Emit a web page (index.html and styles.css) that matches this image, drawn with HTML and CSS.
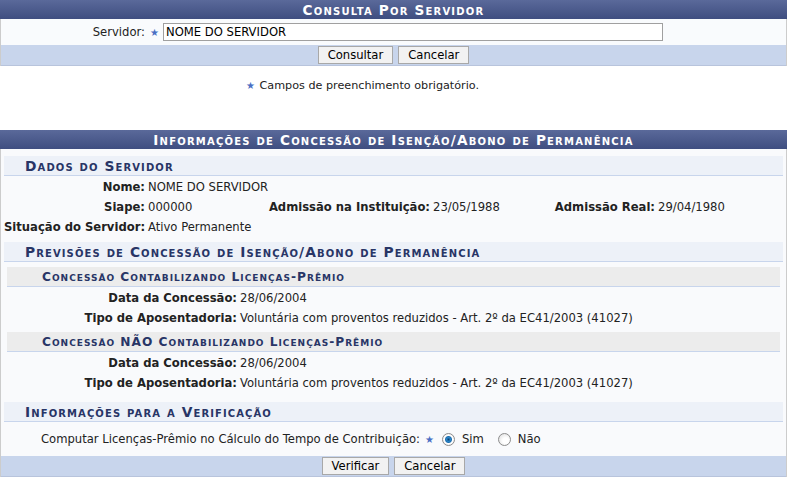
FILE: index.html
```html
<html>
<head>
    <meta charset="utf-8">
    <link rel="stylesheet" href="styles.css">
</head>
<body>
<div class='form busca'>
    <div class='caption'>Consulta Por Servidor</div>
    <div class='campo'>
        <label class='rotulo'>Servidor:</label>
        <span class='obrigatorio'>&#9733;</span>
        <input type='text' class='texto' value='NOME DO SERVIDOR'>
    </div>
    <div class='rodape'>
        <button>Consultar</button>
        <button>Cancelar</button>
    </div>
</div>

<p class='aviso'><span class='obrigatorio'>&#9733;</span> Campos de preenchimento obrigatório.</p>

<div class='form detalhe'>
    <div class='caption'>Informações de Concessão de Isenção/Abono de Permanência</div>
    <div class='corpo'>
        <h3 class='subtitulo'>Dados do Servidor</h3>
        <div class='dados'>
            <span class='th'>Nome:</span><span class='td largo'>NOME DO SERVIDOR</span>
            <span class='th'>Siape:</span><span class='td'>000000</span>
            <span class='th'>Admissão na Instituição:</span><span class='td'>23/05/1988</span>
            <span class='th'>Admissão Real:</span><span class='td'>29/04/1980</span>
            <span class='th'>Situação do Servidor:</span><span class='td largo'>Ativo Permanente</span>
        </div>

        <h3 class='subtitulo'>Previsões de Concessão de Isenção/Abono de Permanência</h3>
        <h4 class='subsub'>Concessão Contabilizando Licenças-Prêmio</h4>
        <div class='previsao'>
            <span class='th'>Data da Concessão:</span><span class='td'>28/06/2004</span>
            <span class='th'>Tipo de Aposentadoria:</span><span class='td'>Voluntária com proventos reduzidos - Art. 2º da EC41/2003 (41027)</span>
        </div>
        <h4 class='subsub'>Concessão NÃO Contabilizando Licenças-Prêmio</h4>
        <div class='previsao'>
            <span class='th'>Data da Concessão:</span><span class='td'>28/06/2004</span>
            <span class='th'>Tipo de Aposentadoria:</span><span class='td'>Voluntária com proventos reduzidos - Art. 2º da EC41/2003 (41027)</span>
        </div>

        <h3 class='subtitulo verificacao'>Informações para a Verificação</h3>
        <div class='computar'>
            <span>Computar Licenças-Prêmio no Cálculo do Tempo de Contribuição:</span>
            <span class='obrigatorio'>&#9733;</span>
            <label class='opcao'><input type='radio' name='computar' checked> Sim</label>
            <label class='opcao'><input type='radio' name='computar'> Não</label>
        </div>
    </div>
    <div class='rodape'>
        <button>Verificar</button>
        <button>Cancelar</button>
    </div>
</div>
</body>
</html>
```

FILE: styles.css
```css
body {
    margin: 0;
    width: 787px;
    font-family: "DejaVu Sans", Verdana, sans-serif;
    font-size: 11.6px;
    color: #222;
    background: #fff;
}

.form {
    border-left: 1px solid #ccc;
    border-right: 1px solid #ccc;
}

.caption {
    height: 19px;
    line-height: 20px;
    text-align: center;
    color: #fff;
    font-weight: bold;
    font-size: 13.6px;
    font-variant: small-caps;
    letter-spacing: 1.2px;
    background: linear-gradient(#5a699a, #3f4e80);
    margin: 0 -1px;
}

.busca .campo {
    display: flex;
    align-items: center;
    height: 26px;
    background: #f9fbfd;
}

.rotulo {
    width: 144px;
    text-align: right;
}

.obrigatorio {
    color: #4a6fc4;
    font-size: 10px;
    margin: 0 4px 0 5px;
}

.texto {
    width: 500px;
    height: 18px;
    border: 1px solid #a0a0a0;
    padding: 0 2px;
    font-family: inherit;
    font-size: 11.6px;
    color: #000;
}

.rodape {
    display: flex;
    justify-content: center;
    gap: 5px;
    height: 21px;
    padding-top: 1px;
    box-sizing: border-box;
    background: #c8d5ec;
    border-bottom: 1px solid #b8c4dc;
}

button {
    height: 18px;
    padding: 0 9px;
    font-family: inherit;
    font-size: 11.6px;
    color: #000;
    background: #f2f2f2;
    border: 1px solid #a8a8a8;
}

.aviso {
    margin: 13px 0 0;
    height: 51px;
    padding-right: 62px;
    font-size: 11.2px;
    text-align: center;
}

.aviso .obrigatorio {
    margin: 0 1px 0 0;
}

.corpo {
    background: #f9fafc;
    padding: 7px 3px 0;
}

.subtitulo {
    margin: 0;
    height: 19px;
    line-height: 21px;
    padding-left: 21px;
    font-size: 13.8px;
    font-variant: small-caps;
    letter-spacing: 1.1px;
    color: #283566;
    background: #edf1f8;
    border-bottom: 1px solid #c8d5ec;
}

.subsub {
    margin: 5px 3px 0;
    height: 19px;
    line-height: 21px;
    padding-left: 35px;
    font-size: 12.2px;
    font-variant: small-caps;
    letter-spacing: 1px;
    color: #283566;
    background: #ececec;
    border-bottom: 1px solid #c8d5ec;
}

.dados {
    display: grid;
    grid-template-columns: 144px 118px 167px 120px 105px auto;
    grid-auto-rows: 20px;
    align-items: center;
    padding-top: 1px;
    margin-bottom: 5px;
}

.previsao {
    display: grid;
    grid-template-columns: 236px auto;
    grid-auto-rows: 20px;
    align-items: center;
    padding-top: 1px;
}

.th {
    font-weight: bold;
    text-align: right;
    padding-right: 3px;
    white-space: nowrap;
}

.td {
    white-space: nowrap;
}

.largo {
    grid-column: 2 / 7;
}

.previsao + .subsub {
    margin-top: 4px;
}

.verificacao {
    margin-top: 9px;
}

.computar {
    display: flex;
    align-items: center;
    height: 34px;
    padding-left: 37px;
}

.computar .obrigatorio {
    margin: 0 8px 0 5px;
}

.opcao {
    display: flex;
    align-items: center;
    margin-right: 14px;
}

.opcao input {
    appearance: none;
    width: 13px;
    height: 13px;
    margin: 0 7px 0 0;
    border: 1px solid #8c8c8c;
    border-radius: 50%;
    background: radial-gradient(circle at 60% 60%, #fff 30%, #d9d9d9 100%);
}

.opcao input:checked {
    background: radial-gradient(circle, #0b3f73 0, #2a86c8 2px, #1f6fb0 3px, #fff 4px, #e4e4e4 100%);
}
```
